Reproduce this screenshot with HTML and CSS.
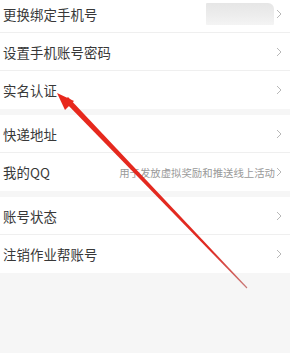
FILE: index.html
```html
<!DOCTYPE html>
<html lang="zh">
<head>
<meta charset="utf-8">
<link rel="stylesheet" href="styles.css">
</head>
<body>
<div class="page">
  <div class="group">
    <div class="row"><span class="label">更换绑定手机号</span><span class="right"><span class="masked"></span><svg class="chev" viewBox="0 0 6 10"><polyline points="1,1 5,5 1,9"/></svg></span></div>
    <div class="row"><span class="label">设置手机账号密码</span><span class="right"><svg class="chev" viewBox="0 0 6 10"><polyline points="1,1 5,5 1,9"/></svg></span></div>
    <div class="row"><span class="label">实名认证</span><span class="right"><svg class="chev" viewBox="0 0 6 10"><polyline points="1,1 5,5 1,9"/></svg></span></div>
  </div>
  <div class="group">
    <div class="row"><span class="label">快递地址</span><span class="right"><svg class="chev" viewBox="0 0 6 10"><polyline points="1,1 5,5 1,9"/></svg></span></div>
    <div class="row"><span class="label">我的QQ</span><span class="right"><span class="hint">用于发放虚拟奖励和推送线上活动</span><svg class="chev" viewBox="0 0 6 10"><polyline points="1,1 5,5 1,9"/></svg></span></div>
  </div>
  <div class="group">
    <div class="row"><span class="label">账号状态</span><span class="right"><svg class="chev" viewBox="0 0 6 10"><polyline points="1,1 5,5 1,9"/></svg></span></div>
    <div class="row"><span class="label">注销作业帮账号</span><span class="right"><svg class="chev" viewBox="0 0 6 10"><polyline points="1,1 5,5 1,9"/></svg></span></div>
  </div>
</div>
<svg class="arrow" viewBox="0 0 290 353">
  <defs>
    <linearGradient id="fade" x1="57" y1="93" x2="247" y2="288" gradientUnits="userSpaceOnUse">
      <stop offset="0" stop-color="#e8281c"/>
      <stop offset="0.8" stop-color="#e02a22"/>
      <stop offset="1" stop-color="#c87a78"/>
    </linearGradient>
  </defs>
  <polygon points="64,101 68,97 247.4,287.6 246.6,288.4" fill="url(#fade)"/>
  <polygon points="57,93 74,101 65,110" fill="#e8281c"/>
</svg>
</body>
</html>
```
FILE: styles.css
```css
html, body {
  margin: 0;
  padding: 0;
  background: #f6f6f6;
  height: 100%;
  overflow: hidden;
}
body {
  position: relative;
  font-family: "Noto Sans CJK SC", "Noto Sans", sans-serif;
}
.page {
  margin-top: -5px;
  display: flex;
  flex-direction: column;
  gap: 6px;
}
.group {
  background: #fff;
  display: flex;
  flex-direction: column;
}
.row {
  height: 38px;
  display: flex;
  align-items: center;
  justify-content: space-between;
  padding: 0 8px 0 3px;
  border-bottom: 1px solid #efefef;
  box-sizing: border-box;
}
.group .row:last-child {
  border-bottom: none;
}
.label {
  font-size: 13.4px;
  color: #383838;
  letter-spacing: 0.1px;
}
.right {
  display: flex;
  align-items: center;
  gap: 1px;
}
.hint {
  font-size: 10.4px;
  color: #999;
}
.masked {
  width: 68px;
  height: 22px;
  margin-right: 1px;
  background: linear-gradient(180deg, #e6e6e6 0%, #ececec 50%, #f4f4f4 100%);
  border-radius: 1px 6px 1px 1px;
}
.chev {
  width: 6px;
  height: 10px;
  fill: none;
  stroke: #b8b8b8;
  stroke-width: 1;
}
.arrow {
  position: absolute;
  left: 0;
  top: 0;
  width: 290px;
  height: 353px;
  pointer-events: none;
}
```
